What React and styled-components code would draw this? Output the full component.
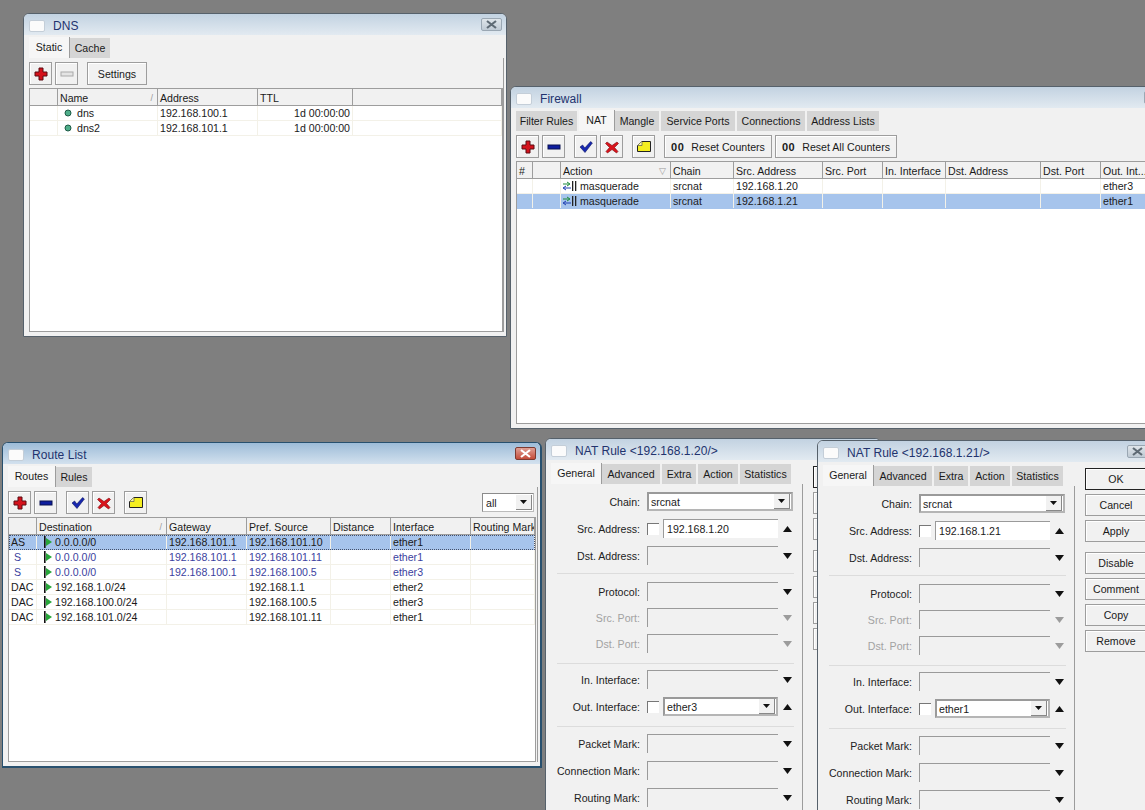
import React from "react";
import styled, { createGlobalStyle } from "styled-components";

const Global = createGlobalStyle`
  html, body { margin: 0; padding: 0; background: #7f7f7f; }
  * { box-sizing: border-box; }
  body { font-family: "Liberation Sans", Arial, sans-serif; font-size: 10.6px; color: #1a1a1a; }
`;

const Desktop = styled.div`
  position: relative;
  width: 1145px;
  height: 810px;
  overflow: hidden;
  background: #7f7f7f;
`;

const Win = styled.section`
  position: absolute;
  left: ${p => p.$x}px;
  top: ${p => p.$y}px;
  width: ${p => p.$w}px;
  height: ${p => p.$h}px;
  display: flex;
  flex-direction: column;
  background: #f1f1f1;
  border: 1px solid ${p => (p.$active ? "#28506e" : "#56616b")};
  border-right-width: ${p => (p.$active ? 2 : 1)}px;
  border-bottom-width: ${p => (p.$active ? 2 : 1)}px;
  border-radius: 6px 6px 0 0;
  overflow: hidden;
`;

const TitleBar = styled.header`
  flex: none;
  height: 21px;
  display: flex;
  align-items: center;
  padding: 2px 4px 0 5px;
  background: ${p =>
    p.$active
      ? "linear-gradient(#9dbcd8, #d3e1ee)"
      : "linear-gradient(#c2d2e1, #e2eaf1)"};
`;

const TitleBox = styled.span`
  width: 16px;
  height: 12px;
  background: #fbfbfb;
  border: 1px solid #c4ced8;
  border-radius: 2px;
  margin-right: 8px;
`;

const TitleText = styled.h1`
  flex: 1;
  margin: 0;
  font-size: 12px;
  font-weight: 400;
  color: #22336e;
  letter-spacing: 0.05px;
  white-space: nowrap;
`;

const CloseBtn = styled.span`
  width: 21px;
  height: 13px;
  margin-top: -2px;
  display: flex;
  align-items: center;
  justify-content: center;
  border-radius: 2px;
  border: 1px solid ${p => (p.$active ? "#7d3a30" : "#9aa7b3")};
  background: ${p =>
    p.$active ? "linear-gradient(#e0a095, #c44c3a)" : "linear-gradient(#dfe5ea, #bfcad4)"};
`;

const Body = styled.div`
  flex: 1;
  min-height: 0;
  display: flex;
  padding: ${p => p.$top ?? 3}px ${p => p.$right ?? 2}px 4px 5px;
`;

const Main = styled.div`
  width: ${p => (p.$w ? `${p.$w}px` : "100%")};
  flex: ${p => (p.$w ? "none" : "1")};
  display: flex;
  flex-direction: column;
  min-height: 0;
`;

const TabRow = styled.nav`
  flex: none;
  height: 20px;
  display: flex;
`;

const Tab = styled.span`
  width: ${p => p.$w}px;
  display: flex;
  align-items: center;
  justify-content: center;
  white-space: nowrap;
  background: ${p => (p.$on ? "#f6f6f6" : "#d5d5d5")};
  border-right: ${p => (p.$on ? "1px solid #9c9c9c" : "2px solid #f1f1f1")};
  padding-bottom: ${p => (p.$on ? 2 : 0)}px;
  margin-top: ${p => (p.$on ? -1 : 0)}px;
  height: ${p => (p.$on ? 21 : 20)}px;
`;

const Panel = styled.div`
  flex: 1;
  min-height: 0;
  display: flex;
  flex-direction: column;
  padding-top: ${p => p.$top ?? 4}px;
  border-right: 1px solid #9c9c9c;
`;

const Toolbar = styled.div`
  flex: none;
  display: flex;
  align-items: center;
  gap: 3px;
  height: 23px;
  margin-bottom: 3px;
`;

const ToolBtn = styled.button`
  flex: none;
  width: ${p => p.$w || 23}px;
  height: 23px;
  margin: 0 0 0 ${p => p.$sep || 0}px;
  padding: 0;
  display: flex;
  align-items: center;
  justify-content: center;
  gap: 7px;
  font: inherit;
  color: #1a1a1a;
  background: #f1f1f1;
  border: 1px solid #9d9d9d;
  box-shadow: inset 1px 1px 0 #fff;
`;

const Zeros = styled.b`
  font-size: 11px;
  letter-spacing: 0.5px;
`;

const FilterBox = styled.div`
  margin-left: auto;
  margin-right: 3px;
  width: 52px;
  height: 19px;
  display: flex;
  align-items: center;
  justify-content: space-between;
  padding: 0 1px 0 3px;
  background: #fff;
  border: 1px solid #8b8b8b;
  border-right-color: #bbb;
  border-bottom-color: #bbb;
`;

const DropBtn = styled.span`
  width: 16px;
  height: 15px;
  display: flex;
  align-items: center;
  justify-content: center;
  background: #f1f1f1;
  border-right: 1px solid #888;
  border-bottom: 1px solid #888;
`;

const Table = styled.div`
  flex: 1;
  min-height: 0;
  background: #fff;
  border: 1px solid #9d9d9d;
  overflow: hidden;
  margin-right: ${p => p.$mr || 0}px;
`;

const Row = styled.div`
  display: grid;
  grid-template-columns: ${p => p.$cols};
  height: ${p => (p.$head ? 17 : 15)}px;
  background: ${p => (p.$head ? "#f1f1f1" : p.$sel ? "#a6c4ec" : "#fff")};
  color: ${p => (p.$blue ? "#3b3f9e" : "#1a1a1a")};
  border-bottom: 1px solid ${p => (p.$head ? "#9d9d9d" : p.$sel ? "#a6c4ec" : "#f3f1e8")};
  outline: ${p => (p.$focus ? "1px dotted #44506a" : "none")};
  outline-offset: -1px;
`;

const Cell = styled.div`
  display: flex;
  align-items: center;
  justify-content: ${p => (p.$end ? "flex-end" : "flex-start")};
  gap: 3px;
  padding: ${p => (p.$head ? 1 : 0)}px 2px 0 ${p => p.$pl ?? 2}px;
  white-space: nowrap;
  overflow: hidden;
  border-right: 1px solid ${p => (p.$head ? "#9d9d9d" : "#f3f1e8")};
`;

const SortMark = styled.span`
  margin-left: auto;
  color: #999;
  font-size: 9px;
  padding-right: 2px;
`;

const SideButtons = styled.div`
  flex: none;
  margin-left: 10px;
  padding-top: 2px;
  width: 62px;
  display: flex;
  flex-direction: column;
  gap: 4px;
`;

const DlgBtn = styled.button`
  height: 22px;
  margin: ${p => (p.$sep ? 6 : 0)}px 0 0;
  padding: 0;
  font: inherit;
  color: #1a1a1a;
  background: #f1f1f1;
  border: 1px solid ${p => (p.$main ? "#222" : "#9d9d9d")};
  box-shadow: inset 1px 1px 0 #fff;
`;

const Form = styled.div`
  padding-top: 8px;
  display: flex;
  flex-direction: column;
`;

const Group = styled.div`
  display: flex;
  flex-direction: column;
  gap: ${p => p.$gap ?? 8}px;
`;

const Divider = styled.hr`
  width: 237px;
  height: 1px;
  margin: ${p => p.$top}px 0 ${p => p.$bottom}px 6px;
  border: 0;
  background: #dcdcdc;
`;

const FormRow = styled.div`
  height: 19px;
  display: grid;
  grid-template-columns: 89px 1fr;
  column-gap: 7px;
  align-items: center;
`;

const Label = styled.label`
  text-align: right;
  white-space: nowrap;
  color: ${p => (p.$off ? "#a2a2a2" : "#222")};
`;

const Controls = styled.div`
  display: flex;
  align-items: center;
  height: 19px;
`;

const Field = styled.div`
  height: 19px;
  width: ${p => p.$w}px;
  display: flex;
  align-items: center;
  justify-content: space-between;
  padding: 0 1px 0 ${p => (p.$strong ? 2 : 3)}px;
  background: ${p => (p.$filled ? "#fff" : "transparent")};
  border-top: ${p => (p.$strong ? 2 : 1)}px solid #9a9a9a;
  border-left: ${p => (p.$strong ? 2 : 1)}px solid #9a9a9a;
  border-right: ${p => (p.$strong ? "2px solid #b5b5b5" : "0")};
  border-bottom: ${p => (p.$strong ? "2px solid #b5b5b5" : "0")};
`;

const Check = styled.span`
  flex: none;
  width: 12px;
  height: 12px;
  background: #fff;
  border-top: 1px solid #777;
  border-left: 1px solid #777;
  margin-right: 4px;
`;

const ArrowSlot = styled.span`
  width: 15px;
  display: flex;
  justify-content: flex-end;
  padding-right: 1px;
`;

/* ---------- drawings ---------- */
const Svg = ({ w = 16, h = 16, children }) => (
  <svg width={w} height={h} viewBox={`0 0 ${w} ${h}`}>{children}</svg>
);

const Plus = () => (
  <Svg>
    <path d="M6 2h4v4h4v4h-4v4H6v-4H2V6h4z" fill="#d4111b" stroke="#5a0d12" strokeWidth="1" />
  </Svg>
);
const Minus = ({ off }) => (
  <Svg>
    <rect x="2" y="6" width="12" height="4" fill={off ? "#e4e4e4" : "#0d1d9e"} stroke={off ? "#aaa" : "#0a1250"} />
  </Svg>
);
const Tick = () => (
  <Svg>
    <path d="M2 8l2.6-2 2.2 3L12.6 2.6 14.4 4 7 13.5z" fill="#1828b0" stroke="#0d1560" strokeWidth="0.6" />
  </Svg>
);
const Cross = () => (
  <Svg>
    <path d="M3 3l5 3.500L13 3l1.500 1.500L10.500 8.500l3.500 4L12.500 14 8 10.500 3.500 14 2 12.500l3.500-4L1.500 4.500z" fill="#d8141c" stroke="#7a0e12" strokeWidth="0.6" />
  </Svg>
);
const Note = () => (
  <Svg>
    <path d="M1.500 6.500L6 2.500h8.500v10h-13z" fill="#f4ee20" stroke="#222" />
    <path d="M1.500 6.500H6V2.500" fill="#fbf8a0" stroke="#555" strokeWidth="0.7" />
  </Svg>
);
const Dot = () => (
  <Svg w={10} h={8}>
    <circle cx="4" cy="4" r="3" fill="#4fae8a" stroke="#1f5a46" strokeWidth="1" />
  </Svg>
);
const Flag = () => (
  <Svg w={9} h={12}>
    <rect x="1" y="0" width="1.600" height="12" fill="#111" />
    <path d="M3 2l6 4-6 4z" fill="#27a63a" />
  </Svg>
);
const Masq = () => (
  <Svg w={14} h={10}>
    <path d="M0 3h6M4 1l3 2-3 2" fill="none" stroke="#1d8a3a" strokeWidth="1" />
    <path d="M8 7H1M3 5L0 7l3 2" fill="none" stroke="#1f3fb0" strokeWidth="1" />
    <rect x="9" y="0" width="1.300" height="10" fill="#222" />
    <rect x="12" y="0" width="1.300" height="10" fill="#222" />
  </Svg>
);
const Tri = ({ up, off }) => (
  <Svg w={9} h={6}>
    <path d={up ? "M4.500 0L9 6H0z" : "M0 0h9L4.500 6z"} fill={off ? "#9c9c9c" : "#111"} />
  </Svg>
);
const SmallTri = () => (
  <Svg w={7} h={4}>
    <path d="M0 0h7L3.500 4z" fill="#111" />
  </Svg>
);
const XMark = ({ color }) => (
  <Svg w={11} h={9}>
    <path d="M1 1l9 7M10 1L1 8" stroke={color} strokeWidth="2.200" fill="none" />
  </Svg>
);

/* ---------- pieces ---------- */
const Window = ({ x, y, w, h, title, active, close, bodyRight, bodyTop, children }) => (
  <Win $x={x} $y={y} $w={w} $h={h} $active={active}>
    <TitleBar $active={active}>
      <TitleBox />
      <TitleText>{title}</TitleText>
      {close && (
        <CloseBtn $active={active}>
          <XMark color={active ? "#fff" : "#5f6b75"} />
        </CloseBtn>
      )}
    </TitleBar>
    <Body $right={bodyRight} $top={bodyTop}>{children}</Body>
  </Win>
);

const Tabs = ({ items, current }) => (
  <TabRow>
    {items.map(([label, width]) => (
      <Tab key={label} $w={width} $on={label === current}>{label}</Tab>
    ))}
  </TabRow>
);

const DataTable = ({ cols, head, rows, mr }) => (
  <Table $mr={mr}>
    <Row $head $cols={cols}>
      {head.map((h, i) => (
        <Cell $head key={i}>
          {h.label}
          {h.sort && <SortMark>{h.sort}</SortMark>}
        </Cell>
      ))}
    </Row>
    {rows.map((r, i) => (
      <Row key={i} $cols={cols} $sel={r.sel} $blue={r.blue} $focus={r.focus}>
        {r.cells.map((c, j) => (
          <Cell key={j} $end={r.endAt === j} $pl={r.pad && r.pad[j]}>{c}</Cell>
        ))}
      </Row>
    ))}
  </Table>
);

const CrudButtons = ({ disabledOff }) => (
  <>
    <ToolBtn><Plus /></ToolBtn>
    <ToolBtn><Minus off={disabledOff} /></ToolBtn>
  </>
);

const StateButtons = () => (
  <>
    <ToolBtn $sep={6}><Tick /></ToolBtn>
    <ToolBtn><Cross /></ToolBtn>
    <ToolBtn $sep={6}><Note /></ToolBtn>
  </>
);

const EmptyRow = ({ label, off }) => (
  <FormRow>
    <Label $off={off}>{label}</Label>
    <Controls>
      <Field $w={131} />
      <ArrowSlot><Tri off={off} /></ArrowSlot>
    </Controls>
  </FormRow>
);

const NatWindow = ({ x, y, title, address, outIf }) => (
  <Window x={x} y={y} w={336} h={400} title={title} close bodyRight={0} bodyTop={4}>
    <Main $w={252}>
      <Tabs
        current="General"
        items={[["General", 51], ["Advanced", 60], ["Extra", 36], ["Action", 42], ["Statistics", 53]]}
      />
      <Panel $top={0}>
        <Form>
          <Group>
            <FormRow>
              <Label>Chain:</Label>
              <Controls>
                <Field $w={146} $filled $strong>srcnat<DropBtn><SmallTri /></DropBtn></Field>
              </Controls>
            </FormRow>
            <FormRow>
              <Label>Src. Address:</Label>
              <Controls>
                <Check />
                <Field $w={115} $filled>{address}</Field>
                <ArrowSlot><Tri up /></ArrowSlot>
              </Controls>
            </FormRow>
            <EmptyRow label="Dst. Address:" />
          </Group>
          <Divider $top={8} $bottom={8} />
          <Group $gap={7}>
            <EmptyRow label="Protocol:" />
            <EmptyRow label="Src. Port:" off />
            <EmptyRow label="Dst. Port:" off />
          </Group>
          <Divider $top={10} $bottom={6} />
          <Group>
            <EmptyRow label="In. Interface:" />
            <FormRow>
              <Label>Out. Interface:</Label>
              <Controls>
                <Check />
                <Field $w={115} $filled $strong>{outIf}<DropBtn><SmallTri /></DropBtn></Field>
                <ArrowSlot><Tri up /></ArrowSlot>
              </Controls>
            </FormRow>
          </Group>
          <Divider $top={10} $bottom={7} />
          <Group>
            <EmptyRow label="Packet Mark:" />
            <EmptyRow label="Connection Mark:" />
            <EmptyRow label="Routing Mark:" />
          </Group>
        </Form>
      </Panel>
    </Main>
    <SideButtons>
      <DlgBtn $main>OK</DlgBtn>
      <DlgBtn>Cancel</DlgBtn>
      <DlgBtn>Apply</DlgBtn>
      <DlgBtn $sep>Disable</DlgBtn>
      <DlgBtn>Comment</DlgBtn>
      <DlgBtn>Copy</DlgBtn>
      <DlgBtn>Remove</DlgBtn>
    </SideButtons>
  </Window>
);

/* ---------- data ---------- */
const dnsRows = [
  ["dns", "192.168.100.1"],
  ["dns2", "192.168.101.1"],
].map(([n, a]) => ({
  endAt: 3,
  pad: { 1: 6 },
  cells: ["", <React.Fragment key="n"><Dot />{n}</React.Fragment>, a, "1d 00:00:00", ""],
}));

const natRows = [
  { ip: "192.168.1.20" },
  { ip: "192.168.1.21", sel: true },
].map(({ ip, sel }) => ({
  sel,
  cells: ["", "", <React.Fragment key="m"><Masq />masquerade</React.Fragment>, "srcnat", ip, "", "", "", "", sel ? "ether1" : "ether3"],
}));

const routes = [
  ["AS", "0.0.0.0/0", "192.168.101.1", "192.168.101.10", "ether1", { sel: true, focus: true }],
  ["S", "0.0.0.0/0", "192.168.101.1", "192.168.101.11", "ether1", { blue: true }],
  ["S", "0.0.0.0/0", "192.168.100.1", "192.168.100.5", "ether3", { blue: true }],
  ["DAC", "192.168.1.0/24", "", "192.168.1.1", "ether2", {}],
  ["DAC", "192.168.100.0/24", "", "192.168.100.5", "ether3", {}],
  ["DAC", "192.168.101.0/24", "", "192.168.101.11", "ether1", {}],
];
const routeRows = routes.map(([flag, dst, gw, src, ifc, opts]) => ({
  ...opts,
  pad: { 0: flag === "S" ? 5 : 2, 1: 6 },
  cells: [flag, <React.Fragment key="d"><Flag />{dst}</React.Fragment>, gw, src, "", ifc, ""],
}));

export default function App() {
  return (
    <Desktop>
      <Global />
      <Window x={23} y={13} w={484} h={324} title="DNS" close>
        <Main>
          <Tabs current="Static" items={[["Static", 41], ["Cache", 42]]} />
          <Panel>
            <Toolbar>
              <CrudButtons disabledOff />
              <ToolBtn $sep={6} $w={60}>Settings</ToolBtn>
            </Toolbar>
            <DataTable
              cols="28px 100px 100px 95px 1fr"
              head={[{ label: "" }, { label: "Name", sort: "/" }, { label: "Address" }, { label: "TTL" }, { label: "" }]}
              rows={dnsRows}
            />
          </Panel>
        </Main>
      </Window>

      <Window x={510} y={86} w={660} h={343} title="Firewall" close>
        <Main>
          <Tabs
            current="NAT"
            items={[
              ["Filter Rules", 63], ["NAT", 36], ["Mangle", 46],
              ["Service Ports", 76], ["Connections", 70], ["Address Lists", 74],
            ]}
          />
          <Panel>
            <Toolbar>
              <CrudButtons />
              <StateButtons />
              <ToolBtn $sep={6} $w={108}><Zeros>00</Zeros>Reset Counters</ToolBtn>
              <ToolBtn $w={122}><Zeros>00</Zeros>Reset All Counters</ToolBtn>
            </Toolbar>
            <DataTable
              cols="16px 28px 110px 63px 89px 60px 63px 95px 60px 1fr"
              head={[
                { label: "#" }, { label: "" }, { label: "Action", sort: "▽" }, { label: "Chain" },
                { label: "Src. Address" }, { label: "Src. Port" }, { label: "In. Interface" },
                { label: "Dst. Address" }, { label: "Dst. Port" }, { label: "Out. Int..." },
              ]}
              rows={natRows}
            />
          </Panel>
        </Main>
      </Window>

      <Window x={2} y={442} w={540} h={326} title="Route List" active close>
        <Main>
          <Tabs current="Routes" items={[["Routes", 48], ["Rules", 38]]} />
          <Panel>
            <Toolbar>
              <CrudButtons />
              <StateButtons />
              <FilterBox>all<DropBtn><SmallTri /></DropBtn></FilterBox>
            </Toolbar>
            <DataTable
              mr={1}
              cols="28px 130px 80px 84px 60px 80px 1fr"
              head={[
                { label: "" }, { label: "Destination", sort: "/" }, { label: "Gateway" },
                { label: "Pref. Source" }, { label: "Distance" }, { label: "Interface" }, { label: "Routing Mark" },
              ]}
              rows={routeRows}
            />
          </Panel>
        </Main>
      </Window>

      <NatWindow x={545} y={438} title="NAT Rule <192.168.1.20/>" address="192.168.1.20" outIf="ether3" />
      <NatWindow x={817} y={440} title="NAT Rule <192.168.1.21/>" address="192.168.1.21" outIf="ether1" />
    </Desktop>
  );
}
